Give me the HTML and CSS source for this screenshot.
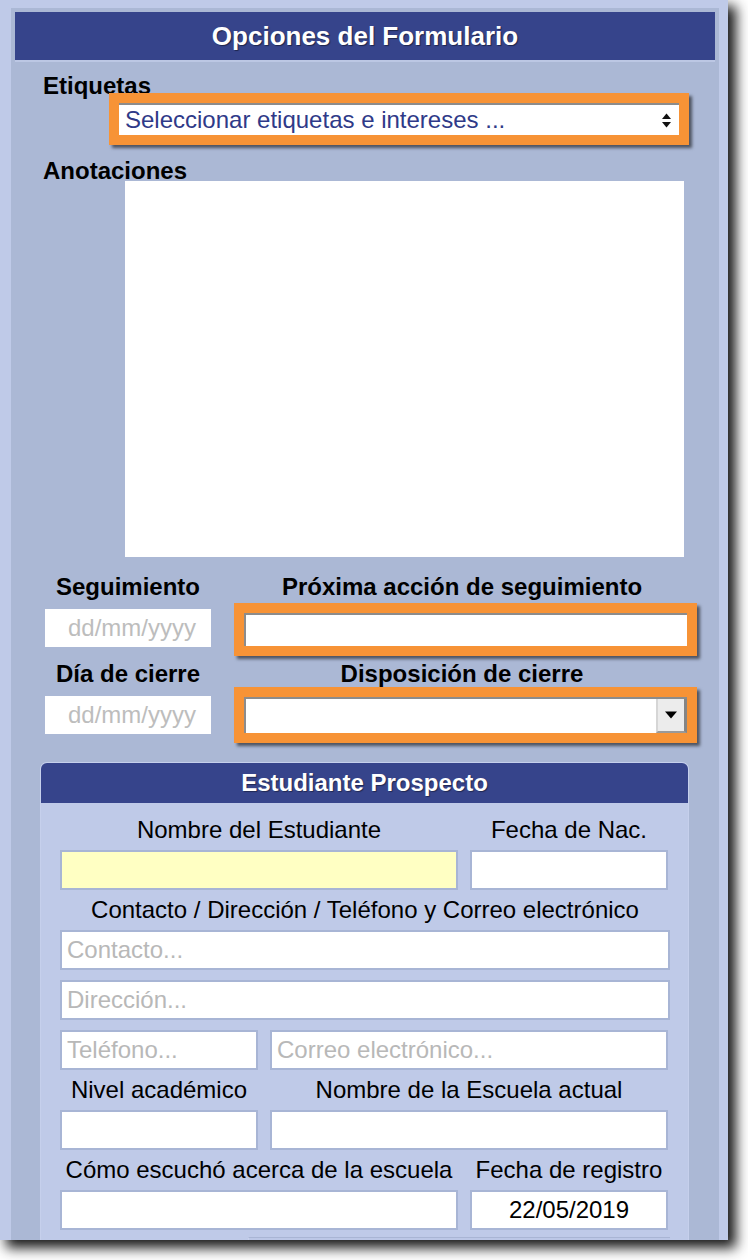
FILE: index.html
```html
<!DOCTYPE html>
<html lang="es">
<head>
<meta charset="utf-8">
<title>Opciones del Formulario</title>
<link rel="stylesheet" href="styles.css">
</head>
<body>
<div class="frame">
  <div class="panel">
    <div class="panel-head">Opciones del Formulario</div>

    <div class="blabel tags-label">Etiquetas</div>
    <div class="hl tags-hl">
      <div class="tags-select">
        <span class="tags-text">Seleccionar etiquetas e intereses ...</span>
        <svg class="updown" width="11" height="17" viewBox="0 0 11 17"><polygon points="1,7 5.5,1.5 10,7" fill="#111"/><polygon points="1,10 5.5,15.5 10,10" fill="#111"/></svg>
      </div>
    </div>

    <div class="blabel notes-label">Anotaciones</div>
    <textarea class="notes"></textarea>

    <div class="frow flabels first">
      <div class="c1 blabel center">Seguimiento</div>
      <div class="c2 blabel center">Próxima acción de seguimiento</div>
    </div>
    <div class="frow ffields">
      <input class="c1 date date1" type="text" placeholder="dd/mm/yyyy">
      <div class="c2 hl hl-text"><input class="hl-input" type="text"></div>
    </div>
    <div class="frow flabels second">
      <div class="c1 blabel center">Día de cierre</div>
      <div class="c2 blabel center">Disposición de cierre</div>
    </div>
    <div class="frow ffields ffields2">
      <input class="c1 date date2" type="text" placeholder="dd/mm/yyyy">
      <div class="c2 hl hl-dd">
        <div class="dd-select">
          <span class="dd-value"></span>
          <span class="dd-btn"><svg width="14" height="8" viewBox="0 0 14 8"><polygon points="1,0.5 13,0.5 7,7.5" fill="#000"/></svg></span>
        </div>
      </div>
    </div>

    <div class="prospect">
      <div class="prospect-head">Estudiante Prospecto</div>
      <div class="prospect-body">
        <div class="prow">
          <div class="field w-big"><div class="plabel">Nombre del Estudiante</div><input class="pin yellow" type="text"></div>
          <div class="field w-small"><div class="plabel">Fecha de Nac.</div><input class="pin" type="text"></div>
        </div>
        <div class="plabel full-label">Contacto / Dirección / Teléfono y Correo electrónico</div>
        <input class="pin full" type="text" placeholder="Contacto...">
        <input class="pin full gap-top" type="text" placeholder="Dirección...">
        <div class="prow gap-top">
          <input class="pin w-small" type="text" placeholder="Teléfono...">
          <input class="pin w-big" type="text" placeholder="Correo electrónico...">
        </div>
        <div class="prow">
          <div class="field w-small"><div class="plabel">Nivel académico</div><input class="pin" type="text"></div>
          <div class="field w-big"><div class="plabel">Nombre de la Escuela actual</div><input class="pin" type="text"></div>
        </div>
        <div class="prow">
          <div class="field w-big"><div class="plabel">Cómo escuchó acerca de la escuela</div><input class="pin" type="text"></div>
          <div class="field w-small"><div class="plabel">Fecha de registro</div><input class="pin center-text" type="text" value="22/05/2019"></div>
        </div>
        <div class="next-block"></div>
      </div>
    </div>
  </div>
</div>
</body>
</html>
```

FILE: styles.css
```css
html, body {
  margin: 0;
  padding: 0;
  background: #ffffff;
}

body {
  font-family: "Liberation Sans", Arial, sans-serif;
  color: #000;
  min-height: 1260px;
}

.frame {
  width: 728px;
  height: 1240px;
  box-sizing: border-box;
  padding: 8px 9px 0 11px;
  background: #bfcae8;
  overflow: hidden;
  box-shadow: 7px 7px 12px 1px rgba(0, 0, 0, 0.9);
}

.panel {
  background: #abb8d5;
  padding: 4px 4px 40px 4px;
  min-height: 1300px;
}

.panel-head {
  height: 48px;
  line-height: 48px;
  background: #36448b;
  color: #fff;
  font-weight: bold;
  font-size: 26px;
  text-align: center;
  border-bottom: 2px solid #bcc7e4;
  text-shadow: 1px 1px 1px rgba(0, 0, 0, 0.45);
}

.blabel {
  font-weight: bold;
  font-size: 24px;
  line-height: 28px;
  height: 28px;
  white-space: nowrap;
}

.center { text-align: center; }

.tags-label {
  margin: 10px 0 -7px 28px;
}

.hl {
  background: #f79336;
  padding: 10px;
  box-sizing: border-box;
  box-shadow: 3px 3px 3px rgba(0, 0, 0, 0.55);
}

.tags-hl {
  margin-left: 94px;
  width: 580px;
  position: relative;
}

.tags-select {
  height: 32px;
  background: #fff;
  border-top: 2px solid #8c8c8c;
  box-sizing: border-box;
  display: flex;
  align-items: center;
  justify-content: space-between;
  padding: 0 7px 0 6px;
}

.tags-text {
  font-size: 24px;
  line-height: 28px;
  color: #2f3a88;
  white-space: nowrap;
}

.updown { display: block; }

.notes-label {
  margin: 12px 0 -4px 28px;
}

.notes {
  display: block;
  margin: 0 0 0 110px;
  width: 559px;
  height: 376px;
  border: none;
  padding: 0;
  background: #fff;
  resize: none;
  box-sizing: border-box;
  font-family: inherit;
}

.frow {
  display: flex;
  gap: 23px;
  margin-left: 30px;
}

.c1 { width: 166px; flex: none; }
.c2 { width: 463px; flex: none; }

.flabels.first { margin-top: 16px; }
.flabels.second { margin-top: 4px; }

.flabels .c2 { padding-right: 7px; box-sizing: border-box; }

.ffields {
  margin-top: 2px;
  align-items: flex-start;
}

.ffields2 { margin-top: -1px; }

.date {
  height: 38px;
  border: none;
  background: #fff;
  box-sizing: border-box;
  padding: 0 0 0 8px;
  font-family: inherit;
  font-size: 24px;
  text-align: center;
  outline: none;
}

.date1 { margin-top: 6px; }
.date2 { margin-top: 9px; }

.date::placeholder { color: #bdbdbd; }

.hl-input {
  display: block;
  width: 100%;
  height: 33px;
  box-sizing: border-box;
  border: none;
  border-top: 2px solid #8c8c8c;
  border-left: 2px solid #8c8c8c;
  background: #fff;
  font-family: inherit;
  font-size: 24px;
  outline: none;
}

.dd-select {
  display: flex;
  height: 36px;
  box-sizing: border-box;
  background: #fff;
  border-top: 2px solid #8c8c8c;
  border-left: 2px solid #8c8c8c;
}

.dd-value { flex: 1; }

.dd-btn {
  width: 31px;
  box-sizing: border-box;
  background: #ececec;
  border-left: 2px solid #d6d6d6;
  border-right: 3px solid #858585;
  border-bottom: 2px solid #9a9a9a;
  display: flex;
  align-items: center;
  justify-content: center;
}

.dd-btn svg { display: block; }

.prospect {
  margin: 19px 26px 0 25px;
  background: #bfcae8;
  border: 1px solid #c6d0ec;
  border-bottom: none;
  border-radius: 7px 7px 0 0;
  overflow: hidden;
  min-height: 600px;
}

.prospect-head {
  height: 40px;
  line-height: 40px;
  background: #36448b;
  color: #fff;
  font-weight: bold;
  font-size: 24px;
  text-align: center;
  text-shadow: 1px 1px 1px rgba(0, 0, 0, 0.4);
}

.prospect-body {
  padding: 7px 0 0 19px;
}

.prow {
  display: flex;
  gap: 12px;
}

.field {
  display: flex;
  flex-direction: column;
  flex: none;
}

.w-big { width: 398px; flex: none; }
.w-small { width: 198px; flex: none; }

.plabel {
  font-size: 24px;
  line-height: 28px;
  height: 28px;
  margin: 6px 0;
  text-align: center;
  white-space: nowrap;
}

.full-label {
  width: 610px;
}

.pin {
  display: block;
  height: 40px;
  box-sizing: border-box;
  border: 2px solid #a8b5d5;
  background: #fff;
  padding: 0 5px;
  font-family: inherit;
  font-size: 24px;
  color: #000;
  outline: none;
  margin: 0;
}

.field .pin { width: 100%; }

.pin.full { width: 610px; }

.pin::placeholder { color: #b8b8b8; }

.yellow { background: #ffffc3; }

.center-text { text-align: center; }

.gap-top { margin-top: 10px; }

.next-block {
  margin: 7px 0 0 188px;
  width: 421px;
  height: 30px;
  border-top: 1px solid #a9b5d4;
  border-left: 1px solid #c8d1ec;
  background: #bcc7e6;
}
```
